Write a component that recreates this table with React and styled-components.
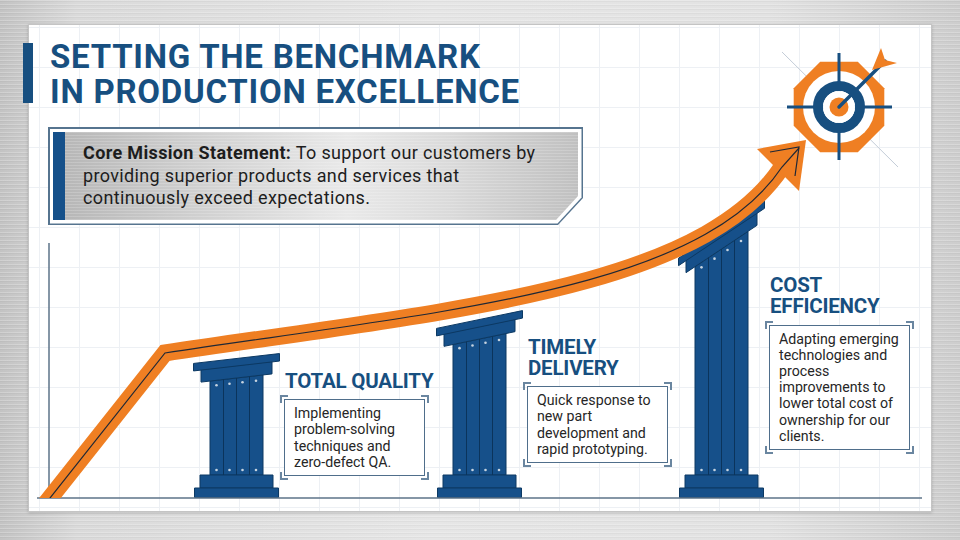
import React from 'react';
import styled, { createGlobalStyle } from 'styled-components';

const GlobalStyle = createGlobalStyle`
  html, body { margin: 0; padding: 0; }
  body {
    width: 960px;
    height: 540px;
    overflow: hidden;
    font-family: Roboto, "Liberation Sans", Arial, sans-serif;
  }
`;

const BLUE = '#174f80';
const ORANGE = '#ef7f23';

const Backdrop = styled.div`
  width: 960px;
  height: 540px;
  box-sizing: border-box;
  padding: 24px 28px 28px 28px;
  background:
    repeating-linear-gradient(180deg, rgba(255,255,255,0.22) 0 1px, rgba(0,0,0,0.03) 1px 2px, transparent 2px 4px),
    linear-gradient(90deg, #c3c3c3 0%, #dadada 8%, #e6e6e6 45%, #e2e2e2 80%, #cdcdcd 100%);
`;

const Panel = styled.main`
  position: relative;
  width: 904px;
  height: 488px;
  box-sizing: border-box;
  border: 1px solid #c4c4c4;
  box-shadow: 0 1px 3px rgba(0,0,0,0.18);
  background-color: #ffffff;
  background-image:
    linear-gradient(to right, #edf0f4 1px, transparent 1px),
    linear-gradient(to bottom, #edf0f4 1px, transparent 1px);
  background-size: 40px 40px;
  background-position: 10px 2px;
  display: grid;
  grid-template-areas: 'stack';
  grid-template-columns: 1fr;
  grid-template-rows: 1fr;
`;

const Intro = styled.div`
  grid-area: stack;
  align-self: start;
  display: flex;
  flex-direction: column;
  align-items: flex-start;
`;

const Header = styled.header`
  display: flex;
  align-items: stretch;
  margin-left: -6px;
  padding-top: 14px;
`;

const TitleBar = styled.div`
  width: 10px;
  margin: 4px 0 6px 0;
  background: ${BLUE};
`;

const Title = styled.h1`
  margin: 0 0 0 17px;
  font-family: Roboto, "Liberation Sans", sans-serif;
  font-weight: 700;
  font-size: 33px;
  line-height: 35px;
  letter-spacing: 0.75px;
  color: ${BLUE};
  white-space: nowrap;
`;

const MissionFrame = styled.section`
  margin: 18px 0 0 19px;
  width: 535px;
  height: 98px;
  box-sizing: border-box;
  padding: 1.5px;
  background: #56748f;
  clip-path: polygon(0 0, 100% 0, 100% calc(100% - 27px), calc(100% - 25px) 100%, 0 100%);
  display: flex;
`;

const MissionGap = styled.div`
  flex: 1;
  display: flex;
  padding: 3.5px;
  background: #ffffff;
  clip-path: polygon(0 0, 100% 0, 100% calc(100% - 26px), calc(100% - 24px) 100%, 0 100%);
`;

const MissionPlate = styled.div`
  flex: 1;
  box-sizing: border-box;
  border-left: 12px solid #15508a;
  padding: 10px 8px 0 18px;
  clip-path: polygon(0 0, 100% 0, 100% calc(100% - 24px), calc(100% - 22px) 100%, 0 100%);
  background:
    repeating-linear-gradient(180deg, rgba(255,255,255,0.18) 0 1px, transparent 1px 3px),
    linear-gradient(90deg, #b7b7b7 0%, #cfcfcf 25%, #e9e9e9 55%, #dadada 75%, #c0c0c0 100%);
`;

const MissionText = styled.p`
  margin: 0;
  font-size: 18px;
  line-height: 22.5px;
  letter-spacing: 0.35px;
  color: #1d1d1d;
  white-space: nowrap;
`;

const Strong = styled.strong`
  font-weight: 700;
`;

const Steps = styled.div`
  grid-area: stack;
  align-self: end;
  margin-left: 164px;
  padding-bottom: 13px;
  display: flex;
  align-items: flex-end;
`;

const Step = styled.div`
  width: ${p => p.$width}px;
  display: flex;
  align-items: flex-end;
`;

const PillarSvg = styled.svg`
  display: block;
  flex: none;
`;

const Info = styled.div`
  width: 149px;
  margin-bottom: ${p => p.$lift}px;
  display: flex;
  flex-direction: column;
`;

const StepTitle = styled.h2`
  margin: 0 0 3.5px 5px;
  font-weight: 700;
  font-size: 20.5px;
  line-height: 21px;
  letter-spacing: -0.2px;
  color: ${BLUE};
  white-space: nowrap;
`;

const BR = '#6a86a0';
const Bracket = styled.div`
  padding: 4px;
  background:
    linear-gradient(${BR}, ${BR}) left top / 8px 2px no-repeat,
    linear-gradient(${BR}, ${BR}) left top / 2px 8px no-repeat,
    linear-gradient(${BR}, ${BR}) right top / 8px 2px no-repeat,
    linear-gradient(${BR}, ${BR}) right top / 2px 8px no-repeat,
    linear-gradient(${BR}, ${BR}) left bottom / 8px 2px no-repeat,
    linear-gradient(${BR}, ${BR}) left bottom / 2px 8px no-repeat,
    linear-gradient(${BR}, ${BR}) right bottom / 8px 2px no-repeat,
    linear-gradient(${BR}, ${BR}) right bottom / 2px 8px no-repeat;
`;

const BoxText = styled.p`
  margin: 0;
  border: 1.5px solid #4f6e8b;
  background: #ffffff;
  padding: 5px 6px 5px 9px;
  font-size: 14.2px;
  line-height: 16.2px;
  color: #262626;
  white-space: nowrap;
`;

const Overlay = styled.svg`
  position: absolute;
  inset: 0;
  width: 100%;
  height: 100%;
  pointer-events: none;
  z-index: 2;
`;

function Pillar({ h, d }) {
  const W = 87;
  const top = x => d * (1 - x / W);
  const band = (x0, x1, o0, o1) =>
    `${x0},${top(x0) + o0} ${x1},${top(x1) + o0} ${x1},${top(x1) + o1} ${x0},${top(x0) + o1}`;
  const shaftTop = x => top(x) + 20;
  const shaft = `17,${shaftTop(17)} 70,${shaftTop(70)} 70,${h - 23} 17,${h - 23}`;
  const rivets = [23.5, 36.5, 49.5, 63];
  const dividers = [30.5, 43.5, 56.5];
  return (
    <PillarSvg width={W} height={h} viewBox={`0 0 ${W} ${h}`}>
      <g fill="#16508a" stroke="#0c3963" strokeWidth="1" strokeLinejoin="round">
        <polygon points={shaft} />
        <polygon points={band(8, 79, 7.5, 20)} />
        <polygon points={band(0.5, 86.5, 0.5, 8)} />
        <rect x="7" y={h - 23} width="73" height="13" />
        <rect x="1.5" y={h - 10} width="84" height="9.5" />
      </g>
      {dividers.map(x => (
        <line key={x} x1={x} y1={shaftTop(x)} x2={x} y2={h - 23} stroke="#0b345c" strokeWidth="1" />
      ))}
      {rivets.map(x => (
        <g key={x} fill="#c6d3e0">
          <circle cx={x} cy={top(x) + 25} r="1.3" />
          <circle cx={x} cy={h - 28} r="1.3" />
        </g>
      ))}
    </PillarSvg>
  );
}

const ARROW = 'M40.5,510 L165,353 C450,310 700,290 782,167';

function Chart() {
  return (
    <Overlay viewBox="29 25 902 486" preserveAspectRatio="none">
      <defs>
        <clipPath id="aboveBase">
          <rect x="0" y="0" width="960" height="498" />
        </clipPath>
      </defs>
      <line x1="49" y1="243" x2="49" y2="498" stroke="#5d7389" strokeWidth="1.5" />
      <line x1="37" y1="498" x2="922" y2="498" stroke="#5d7389" strokeWidth="1.5" />
      <g clipPath="url(#aboveBase)">
        <path d={ARROW} fill="none" stroke={ORANGE} strokeWidth="17" strokeLinejoin="miter" />
        <polygon points="806,140 757,149 799,191" fill={ORANGE} />
        <path d={ARROW + ' L799,148'} fill="none" stroke="#1f2836" strokeWidth="1.2" />
        <polyline points="770,152 799,147 795,176" fill="none" stroke="#1f2836" strokeWidth="1.2" />
      </g>
      <line x1="782" y1="52" x2="898" y2="167" stroke="#c4cdd8" strokeWidth="1" />
      <polygon
        points="884.3,88.3 857.8,61.7 820.2,61.7 793.7,88.3 793.7,125.7 820.2,152.3 857.8,152.3 884.3,125.7"
        fill={ORANGE}
      />
      <circle cx="839" cy="107" r="36" fill="#ffffff" />
      <line x1="787" y1="107" x2="892" y2="107" stroke={BLUE} strokeWidth="3" />
      <line x1="839" y1="53" x2="839" y2="160" stroke={BLUE} strokeWidth="3" />
      <circle cx="839" cy="107" r="21" fill="none" stroke={BLUE} strokeWidth="10" />
      <circle cx="839" cy="107" r="16" fill="#ffffff" />
      <circle cx="839" cy="107" r="9.5" fill={ORANGE} />
      <line x1="839" y1="107" x2="885" y2="61" stroke={BLUE} strokeWidth="3.5" strokeLinecap="round" />
      <polygon points="872,70 881,48 885,60 897,63" fill={ORANGE} />
    </Overlay>
  );
}

const steps = [
  {
    key: 'q', width: 243, h: 145, d: 10, lift: 18,
    title: ['TOTAL QUALITY'],
    text: ['Implementing', 'problem-solving', 'techniques and', 'zero-defect QA.'],
  },
  {
    key: 't', width: 242, h: 188, d: 18, lift: 31,
    title: ['TIMELY', 'DELIVERY'],
    text: ['Quick response to', 'new part', 'development and', 'rapid prototyping.'],
  },
  {
    key: 'c', width: 240, h: 298, d: 58, lift: 44,
    title: ['COST', 'EFFICIENCY'],
    text: ['Adapting emerging', 'technologies and', 'process', 'improvements to', 'lower total cost of', 'ownership for our', 'clients.'],
  },
];

const lines = arr =>
  arr.map((t, i) => (
    <React.Fragment key={i}>
      {i > 0 && <br />}
      {t}
    </React.Fragment>
  ));

export default function App() {
  return (
    <>
      <GlobalStyle />
      <Backdrop>
        <Panel>
          <Intro>
            <Header>
              <TitleBar />
              <Title>
                SETTING THE BENCHMARK
                <br />
                IN PRODUCTION EXCELLENCE
              </Title>
            </Header>
            <MissionFrame>
              <MissionGap>
                <MissionPlate>
                  <MissionText>
                    <Strong>Core Mission Statement:</Strong> To support our customers by
                    <br />
                    providing superior products and services that
                    <br />
                    continuously exceed expectations.
                  </MissionText>
                </MissionPlate>
              </MissionGap>
            </MissionFrame>
          </Intro>
          <Steps>
            {steps.map(s => (
              <Step key={s.key} $width={s.width}>
                <Pillar h={s.h} d={s.d} />
                <Info $lift={s.lift}>
                  <StepTitle>{lines(s.title)}</StepTitle>
                  <Bracket>
                    <BoxText>{lines(s.text)}</BoxText>
                  </Bracket>
                </Info>
              </Step>
            ))}
          </Steps>
          <Chart />
        </Panel>
      </Backdrop>
    </>
  );
}
